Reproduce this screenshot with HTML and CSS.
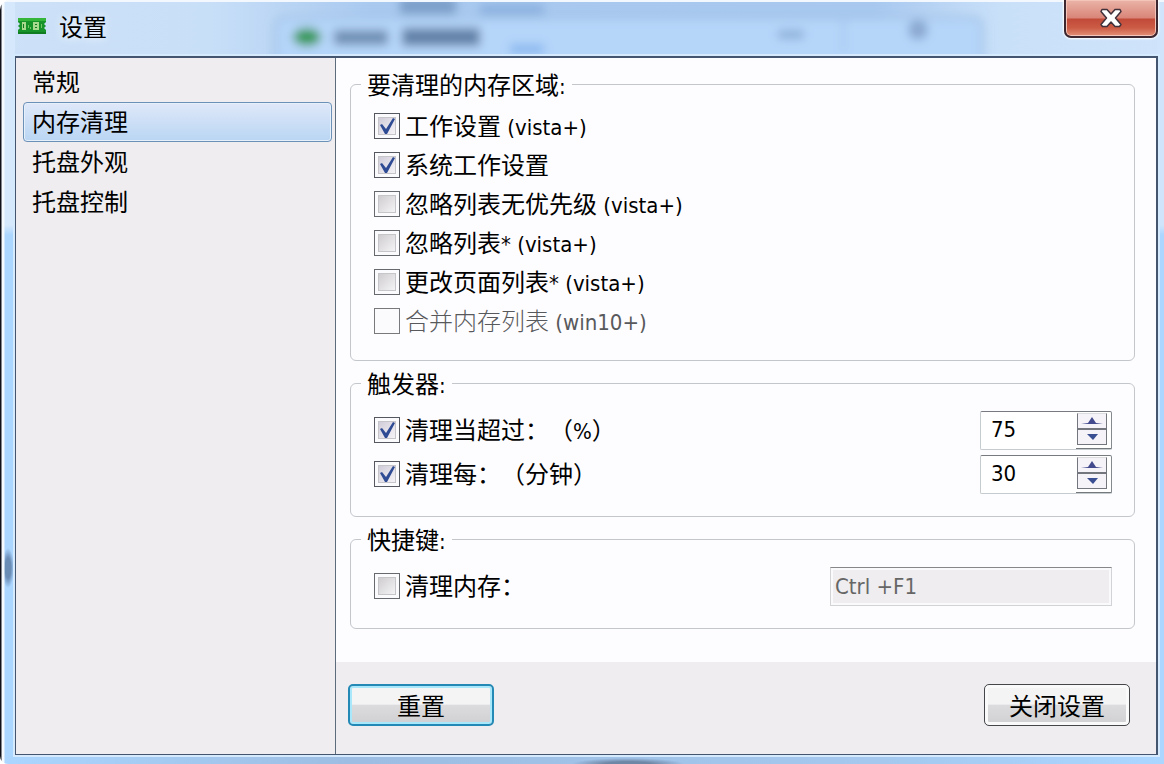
FILE: index.html
```html
<!DOCTYPE html>
<html lang="zh-CN">
<head>
<meta charset="utf-8">
<title>设置</title>
<link rel="stylesheet" href="styles.css">
</head>
<body>
<div class="window">
  <svg class="glass" aria-hidden="true">
    <defs>
      <filter id="soft" x="-20%" y="-60%" width="140%" height="220%"><feGaussianBlur stdDeviation="5"/></filter>
    </defs>
    <g filter="url(#soft)">
      <rect x="276" y="16" width="706" height="60" rx="8" fill="#b5d5f9" stroke="#9fc0e3" stroke-width="3"/>
      <rect x="400" y="-4" width="56" height="16" fill="#7c9fc9"/>
      <rect x="480" y="2" width="64" height="11" fill="#8cb2e0"/>
      <ellipse cx="307" cy="35" rx="14" ry="9" fill="#349a58"/>
      <rect x="334" y="28" width="54" height="15" fill="#6f8fb4"/>
      <rect x="402" y="26" width="78" height="18" fill="#6482a8"/>
      <rect x="510" y="42" width="34" height="10" fill="#8bbaf0"/>
      <rect x="778" y="28" width="26" height="9" fill="#8fb0d8"/>
      <rect x="842" y="16" width="3" height="34" fill="#a3c5ea"/>
      <circle cx="918" cy="28" r="10" fill="#8aa8d0"/>
    </g>
  </svg>
  <header class="titlebar">
    <svg class="app-icon" viewBox="0 0 28 16" aria-hidden="true">
      <path d="M0 0h28v4l-2 2 2 2-2 2 2 2v4H0v-4l2-2-2-2 2-2-2-2z" fill="#17932a"/>
      <path d="M0 0h28v3H0z" fill="#35b63b"/>
      <path d="M4 4h4v8H4zM15 4h6v8h-6z" fill="#a9d98c"/>
      <path d="M5 6h1v4H5zM17 6h2v1h-2zM17 9h2v1h-2z" fill="#147a22"/>
      <path d="M10 7h1v3h-1zM12 9h1v2h-1zM23 6h1v4h-1z" fill="#72c763"/>
      <path d="M0 14h28v2H0z" fill="#0f7d20"/>
    </svg>
    <h1 class="title">设置</h1>
    <button class="close" type="button" aria-label="关闭">
      <svg viewBox="0 0 24 20" aria-hidden="true"><path d="M3 1.500H8L12 6 16 1.500H21L22 3.500 16.500 10 22 16.500 20.500 18.500H16L12 14 8 18.500H3.500L2 16.500 7.500 10 2 3.500Z" fill="#fff" stroke="#40303a" stroke-width="1.500" stroke-linejoin="round"/></svg>
    </button>
  </header>
  <div class="client">
    <nav class="sidebar">
      <a class="nav-item" href="#general">常规</a>
      <a class="nav-item selected" href="#memory" aria-current="page">内存清理</a>
      <a class="nav-item" href="#look">托盘外观</a>
      <a class="nav-item" href="#control">托盘控制</a>
    </nav>
    <form class="panel">
      <div class="groups">
        <fieldset class="group">
          <legend>要清理的内存区域<span class="latin">:</span></legend>
          <div class="rows compact">
            <label class="check"><input type="checkbox" checked><span>工作设置<span class="latin"> (vista+)</span></span></label>
            <label class="check"><input type="checkbox" checked><span>系统工作设置</span></label>
            <label class="check"><input type="checkbox"><span>忽略列表无优先级<span class="latin"> (vista+)</span></span></label>
            <label class="check"><input type="checkbox"><span>忽略列表<span class="latin">* (vista+)</span></span></label>
            <label class="check"><input type="checkbox"><span>更改页面列表<span class="latin">* (vista+)</span></span></label>
            <label class="check disabled"><input type="checkbox" disabled><span>合并内存列表<span class="latin"> (win10+)</span></span></label>
          </div>
        </fieldset>
        <fieldset class="group">
          <legend>触发器<span class="latin">:</span></legend>
          <div class="rows">
            <div class="row">
              <label class="check"><input type="checkbox" checked><span>清理当超过：（<span class="latin">%</span>）</span></label>
              <div class="spinner">
                <input type="text" inputmode="numeric" value="75" aria-label="百分比">
                <div class="steps">
                  <button type="button" aria-label="增加"><svg viewBox="0 0 22 9"><path d="M0 8l7-1 4-6 4 6 7 1z" fill="#434a8e"/></svg></button>
                  <button type="button" aria-label="减少"><svg viewBox="0 0 22 9"><path d="M6 2h11l-5 6z" fill="#3a4e92"/></svg></button>
                </div>
              </div>
            </div>
            <div class="row">
              <label class="check"><input type="checkbox" checked><span>清理每：（分钟）</span></label>
              <div class="spinner">
                <input type="text" inputmode="numeric" value="30" aria-label="分钟">
                <div class="steps">
                  <button type="button" aria-label="增加"><svg viewBox="0 0 22 9"><path d="M0 8l7-1 4-6 4 6 7 1z" fill="#434a8e"/></svg></button>
                  <button type="button" aria-label="减少"><svg viewBox="0 0 22 9"><path d="M6 2h11l-5 6z" fill="#3a4e92"/></svg></button>
                </div>
              </div>
            </div>
          </div>
        </fieldset>
        <fieldset class="group">
          <legend>快捷键<span class="latin">:</span></legend>
          <div class="rows">
            <div class="row">
              <label class="check"><input type="checkbox"><span>清理内存：</span></label>
              <input class="hotkey" type="text" value="Ctrl +F1" aria-label="快捷键" disabled>
            </div>
          </div>
        </fieldset>
      </div>
      <footer class="footer">
        <button class="button primary" type="button">重置</button>
        <button class="button" type="button">关闭设置</button>
      </footer>
    </form>
  </div>
</div>
</body>
</html>
```
FILE: styles.css
```css
* { box-sizing: border-box; }

body {
  margin: 0;
  font-family: "Noto Sans CJK SC", sans-serif;
  font-size: 24px;
  line-height: 32px;
  color: #000;
  text-spacing-trim: space-all;
}

input, button { font: inherit; color: inherit; }

.latin {
  font-family: "DejaVu Sans Condensed", "DejaVu Sans", sans-serif;
  font-size: 22px;
  line-height: 24px;
}

.window {
  position: relative;
  display: flex;
  flex-direction: column;
  min-height: 100vh;
  padding: 0 6px 9px 15px;
  overflow: hidden;
  border-radius: 10px 0 0 8px;
  background:
    linear-gradient(#f2f8fe, #f2f8fe) 0 0 / 100% 2px no-repeat,
    linear-gradient(90deg, #101018 0 1px, #f4fafe 2px 4px, transparent 5px),
    radial-gradient(6px 20px at 8px 568px, #6a8db6 50%, transparent),
    radial-gradient(56px 6px at 628px 100%, #6f87a6 40%, transparent),
    linear-gradient(90deg, #abd6ff, #9dbde2 30%, #a4c8ee 75%, #abd6ff) 0 100% / 100% 8px no-repeat,
    linear-gradient(#d6e8fb 0 225px, #abd6ff 235px) 0 0 / 15px 100% no-repeat,
    linear-gradient(#d0e5fb 0 225px, #abd6ff 235px) 100% 0 / 7px 100% no-repeat,
    linear-gradient(90deg, #cde1f7, #c8dff8 18%, #a9c9ef 32%, #a8c8ef 75%, #c9e0f9 86%, #cfe4fa);
}

.glass {
  position: absolute;
  top: 2px;
  left: 0;
  width: 100%;
  height: 54px;
}

.titlebar {
  position: relative;
  display: flex;
  align-items: center;
  height: 56px;
  padding: 0 0 4px 3px;
}

.app-icon {
  width: 28px;
  height: 16px;
}

.title {
  margin: 0 0 0 13px;
  font-size: 24px;
  font-weight: 400;
  line-height: 32px;
  text-shadow: 0 0 8px #fff;
}

.close {
  display: flex;
  align-items: center;
  justify-content: center;
  align-self: flex-start;
  width: 94px;
  height: 38px;
  margin-left: auto;
  padding: 0;
  border: 2px solid #3c2730;
  border-top: 0;
  border-radius: 0 0 7px 7px;
  background: linear-gradient(#eab4a8, #d98578 18px, #c14a38 19px, #cc5c46 28px, #e39078);
  box-shadow: inset 0 0 0 1px #f3c5ba, 0 0 2px 1px #fff;
}

.close svg { width: 24px; height: 20px; }

.client {
  position: relative;
  display: flex;
  flex: 1;
  border: 2px solid #44566f;
  border-width: 2px 2px 1px 1px;
  background: #fdfcfe;
  box-shadow: 0 0 0 2px #d5eafc;
}

.sidebar {
  flex: none;
  width: 320px;
  padding: 4px 3px 4px 7px;
  border-right: 1px solid #5c6c7c;
  background: #efedef;
}

.nav-item {
  display: block;
  height: 40px;
  padding: 2px 8px;
  border: 1px solid transparent;
  border-radius: 4px;
  color: #000;
  text-decoration: none;
}

.nav-item.selected {
  border-color: #6c91b8;
  background: linear-gradient(#dfe8f9, #b9d5f3);
  box-shadow: inset 0 0 0 1px #e6f0fb;
}

.panel {
  display: flex;
  flex: 1;
  flex-direction: column;
}

.groups {
  display: flex;
  flex: 1;
  flex-direction: column;
  gap: 6px;
  padding: 10px 21px 0 14px;
}

.group {
  min-width: 0;
  margin: 0;
  padding: 0;
  border: 1px solid #c3c7cb;
  border-radius: 6px;
}

.group legend {
  margin-left: 10px;
  padding: 0 6px;
}

.rows {
  display: flex;
  flex-direction: column;
  padding: 9px 22px 20px 23px;
}

.rows.compact { padding-top: 6px; }

.row {
  display: flex;
  align-items: center;
  justify-content: space-between;
  height: 44px;
}

.check {
  display: flex;
  align-items: center;
  gap: 5px;
}

.check > span { padding-bottom: 2px; }

.compact .check { height: 39px; }

.check input {
  flex: none;
  width: 26px;
  height: 26px;
  margin: 0;
  appearance: none;
  border: 1px solid #66696e;
  background: linear-gradient(135deg, #cfcdd0, #f4f3f5) center / 16px 16px no-repeat #fbfafc;
  outline: 1px solid #c6c6ca;
  outline-offset: -5px;
}

.check input:checked {
  border-color: #55585e;
  background:
    url("data:image/svg+xml,%3Csvg xmlns='http://www.w3.org/2000/svg' viewBox='0 0 18 18'%3E%3Cpath d='M2 8l2-1 4 5 7-11 2 1-8 15H7z' fill='%232f4b94'/%3E%3C/svg%3E") center / 18px 18px no-repeat,
    linear-gradient(135deg, #d0cdda, #f6f3f7) center / 16px 16px no-repeat #fbfafc;
}

.check input:disabled {
  border-color: #77797d;
  background: #fbfafc;
  outline: none;
}

.disabled { color: #58595c; font-weight: 300; }

.spinner {
  display: flex;
  width: 132px;
  height: 39px;
  border: 1px solid #c6cbd0;
  border-top-color: #777b80;
  border-right-color: #858a8e;
  border-radius: 2px;
  background: #fff;
}

.spinner input {
  flex: 1;
  min-width: 0;
  padding: 0 0 0 10px;
  border: 0;
  background: transparent;
  font-family: "DejaVu Sans Condensed", "DejaVu Sans", sans-serif;
  font-size: 22px;
}

.steps {
  display: flex;
  flex: none;
  flex-direction: column;
  width: 35px;
  padding: 1px 4px 3px 1px;
  border-bottom: 1px solid #74797d;
}

.steps button {
  display: flex;
  flex: 1;
  align-items: center;
  justify-content: center;
  padding: 0;
  border: 1px solid #73777d;
  border-top-color: #dcdce0;
  background: #f5f3f7;
}

.steps button + button { border-top-color: #73777d; }

.steps svg { width: 22px; height: 9px; }

.hotkey {
  width: 282px;
  height: 39px;
  padding: 0 4px;
  border: 1px solid #d1d3d6;
  border-top-color: #85878b;
  background: #efedef;
  box-shadow: inset 0 0 0 2px #faf9fb;
  color: #666;
  font-family: "DejaVu Sans Condensed", "DejaVu Sans", sans-serif;
  font-size: 22px;
}

.footer {
  display: flex;
  justify-content: space-between;
  padding: 22px 26px 28px 12px;
  background: #efedef;
}

.button {
  width: 146px;
  height: 42px;
  padding: 0;
  border: 1px solid #44464a;
  border-radius: 5px;
  background: linear-gradient(#f4f4f5 0 48%, #dcdcde 50%, #d0d0d3);
  box-shadow: inset 0 0 0 3px #fafafb;
}

.button.primary {
  border: 2px solid #2589b5;
  box-shadow: inset 0 0 0 2px #a9e8fa;
}
```
